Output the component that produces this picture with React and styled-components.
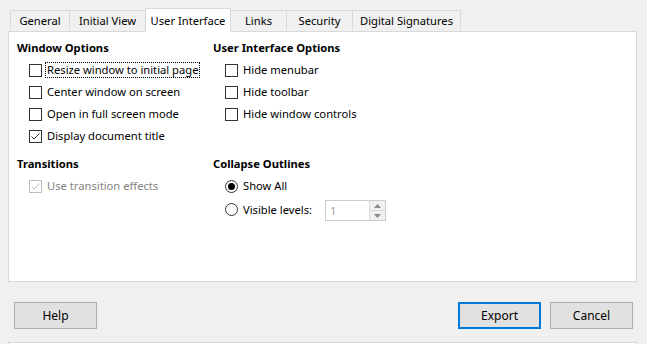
import styled, { createGlobalStyle } from 'styled-components'

const GlobalStyle = createGlobalStyle`
  html, body {
    margin: 0;
    padding: 0;
    background: #f0f0f0;
  }
  body {
    font-family: "Noto Sans", "Open Sans", sans-serif;
    font-size: 11.2px;
    color: #000;
  }
`

const Dialog = styled.div`
  width: 647px;
  height: 344px;
  overflow: hidden;
  padding: 8px 10px 0 8px;
  box-sizing: border-box;
  background: #f0f0f0;
`

const TabBar = styled.div`
  display: flex;
  align-items: flex-end;
  padding-left: 2px;
  height: 23px;
`

const Tab = styled.div`
  box-sizing: border-box;
  width: ${p => p.w}px;
  height: ${p => (p.active ? 24 : 21)}px;
  margin-bottom: ${p => (p.active ? -1 : 0)}px;
  display: flex;
  align-items: center;
  justify-content: center;
  padding-bottom: ${p => (p.active ? 1 : 0)}px;
  border: 1px solid #d9d9d9;
  border-bottom: ${p => (p.active ? 'none' : '1px solid transparent')};
  border-right: ${p => (p.last || p.active ? '1px solid #d9d9d9' : 'none')};
  border-left: ${p => (p.afterActive ? 'none' : '1px solid #d9d9d9')};
  background: ${p => (p.active ? '#fff' : '#f0f0f0')};
  position: relative;
  z-index: ${p => (p.active ? 2 : 0)};
  white-space: nowrap;
`

const Panel = styled.div`
  box-sizing: border-box;
  height: 251px;
  background: #fff;
  border: 1px solid #d9d9d9;
  padding: 8px 8px 0 8px;
  display: grid;
  grid-template-columns: 196px 1fr;
  grid-template-rows: auto auto;
  align-content: start;
  row-gap: 9px;
`

const Group = styled.div`
  display: flex;
  flex-direction: column;
`

const GroupTitle = styled.div`
  font-weight: 700;
  height: 16px;
  line-height: 16px;
  margin-bottom: 3px;
  white-space: nowrap;
`

const Item = styled.label`
  display: flex;
  align-items: center;
  gap: 4px;
  height: ${p => p.h || 22}px;
  padding-left: 12px;
  white-space: nowrap;
  color: ${p => (p.disabled ? '#838383' : '#000')};
`

const Box = styled.span`
  box-sizing: border-box;
  width: 13px;
  height: 13px;
  border: 1px solid ${p => (p.disabled ? '#bcbcbc' : '#333')};
  background: #fff;
  display: flex;
  align-items: center;
  justify-content: center;
  flex: none;
`

const Radio = styled.span`
  box-sizing: border-box;
  width: 13px;
  height: 13px;
  border-radius: 50%;
  border: 1px solid #333;
  background: #fff;
  display: flex;
  align-items: center;
  justify-content: center;
  flex: none;

  &::after {
    content: '';
    width: 7px;
    height: 7px;
    border-radius: 50%;
    background: ${p => (p.checked ? '#000' : 'transparent')};
  }
`

const Caption = styled.span`
  border: 1px dotted ${p => (p.focused ? '#000' : 'transparent')};
  padding: 0 1px;
  line-height: 14px;
  margin-left: -1px;
`

const SpinBox = styled.div`
  box-sizing: border-box;
  width: 61px;
  height: 21px;
  margin-left: ${p => p.offset}px;
  margin-top: 2px;
  border: 1px solid #cccccc;
  display: flex;
  background: #fff;
`

const SpinValue = styled.div`
  flex: 1;
  color: #a0a0a0;
  padding-left: 4px;
  line-height: 19px;
`

const SpinButtons = styled.div`
  width: 15px;
  display: flex;
  flex-direction: column;
  border-left: 1px solid #dcdcdc;
`

const SpinArrow = styled.div`
  flex: 1;
  display: flex;
  align-items: center;
  justify-content: center;
  background: #f0f0f0;
  & + & {
    border-top: 1px solid #dcdcdc;
  }
`

const Footer = styled.div`
  display: flex;
  align-items: center;
  padding: 0 4px 0 6px;
  margin-top: 20px;
  font-size: 12px;
`

const Spacer = styled.div`
  flex: 1;
`

const Button = styled.button`
  box-sizing: border-box;
  width: 83px;
  height: 27px;
  font: inherit;
  color: #000;
  background: #e1e1e1;
  border: ${p => (p.primary ? '2px solid #0078d7' : '1px solid #adadad')};
  margin-left: ${p => p.gap || 0}px;
  padding: 0;
`

const NextPanel = styled.div`
  height: 10px;
  margin-top: 13px;
  background: #fff;
  border: 1px solid #d9d9d9;
`

const Check = ({ color = '#333' }) => (
  <svg width="11" height="11" viewBox="0 0 11 11">
    <path d="M1.5 5.5 L4 8 L9.5 2.5" fill="none" stroke={color} strokeWidth="1" />
  </svg>
)

const CheckItem = ({ label, checked, disabled, focused }) => (
  <Item disabled={disabled}>
    <Box disabled={disabled}>{checked && <Check color={disabled ? '#bcbcbc' : '#333'} />}</Box>
    <Caption focused={focused}>{label}</Caption>
  </Item>
)

const Arrow = ({ up }) => (
  <svg width="7" height="4" viewBox="0 0 7 4">
    <path d={up ? 'M0 4 L3.5 0 L7 4 Z' : 'M0 0 L3.5 4 L7 0 Z'} fill="#8a8a8a" />
  </svg>
)

const tabs = [
  { label: 'General', w: 59 },
  { label: 'Initial View', w: 76 },
  { label: 'User Interface', w: 86, active: true },
  { label: 'Links', w: 55 },
  { label: 'Security', w: 66 },
  { label: 'Digital Signatures', w: 109, last: true },
]

const App = () => {
  return (
    <Dialog>
      <GlobalStyle />
      <TabBar>
        {tabs.map((t, i) => (
          <Tab key={t.label} w={t.w} active={t.active} last={t.last} afterActive={i > 0 && tabs[i - 1].active}>
            {t.label}
          </Tab>
        ))}
      </TabBar>
      <Panel>
        <Group>
          <GroupTitle>Window Options</GroupTitle>
          <CheckItem label="Resize window to initial page" focused />
          <CheckItem label="Center window on screen" />
          <CheckItem label="Open in full screen mode" />
          <CheckItem label="Display document title" checked />
        </Group>
        <Group>
          <GroupTitle>User Interface Options</GroupTitle>
          <CheckItem label="Hide menubar" />
          <CheckItem label="Hide toolbar" />
          <CheckItem label="Hide window controls" />
        </Group>
        <Group>
          <GroupTitle>Transitions</GroupTitle>
          <CheckItem label="Use transition effects" checked disabled />
        </Group>
        <Group>
          <GroupTitle>Collapse Outlines</GroupTitle>
          <Item>
            <Radio checked />
            <Caption>Show All</Caption>
          </Item>
          <Item h={25}>
            <Radio />
            <Caption>Visible levels:</Caption>
            <SpinBox offset={7}>
              <SpinValue>1</SpinValue>
              <SpinButtons>
                <SpinArrow><Arrow up /></SpinArrow>
                <SpinArrow><Arrow /></SpinArrow>
              </SpinButtons>
            </SpinBox>
          </Item>
        </Group>
      </Panel>
      <Footer>
        <Button>Help</Button>
        <Spacer />
        <Button primary>Export</Button>
        <Button gap={9}>Cancel</Button>
      </Footer>
      <NextPanel />
    </Dialog>
  )
}

export default App
